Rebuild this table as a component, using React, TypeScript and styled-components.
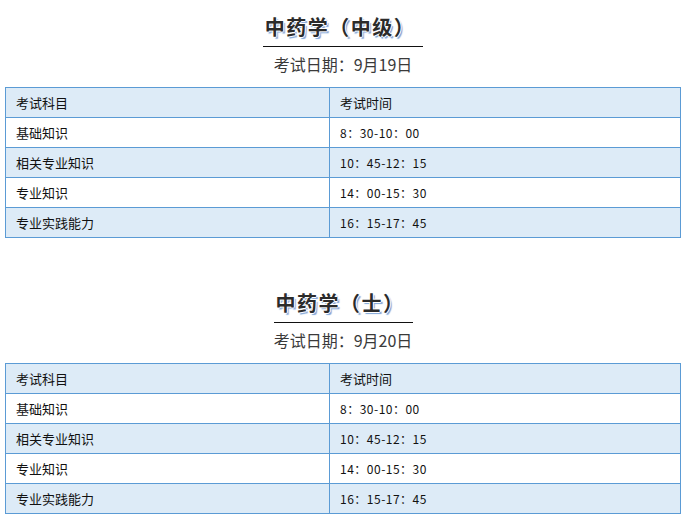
import React from "react";
import styled, { createGlobalStyle } from "styled-components";

type Exam = {
  subject: string;
  time: string;
}

type Schedule = {
  title: string;
  date: string;
  exams: Exam[];
}

const exams: Exam[] = [
  { subject: "基础知识", time: "8：30-10：00" },
  { subject: "相关专业知识", time: "10：45-12：15" },
  { subject: "专业知识", time: "14：00-15：30" },
  { subject: "专业实践能力", time: "16：15-17：45" },
];

const schedules: Schedule[] = [
  { title: "中药学（中级）", date: "考试日期：9月19日", exams },
  { title: "中药学（士）", date: "考试日期：9月20日", exams },
];

const GlobalStyle = createGlobalStyle`
  body {
    margin: 0;
    background: #fff;
    font-family: "Noto Sans CJK SC", "Noto Sans", sans-serif;
  }
`;

const App: React.FC = () => {
  return (
    <Page>
      <GlobalStyle />
      {schedules.map((s) => (
        <Section key={s.title}>
          <Title>{s.title}</Title>
          <DateLine>{s.date}</DateLine>
          <Table>
            <colgroup>
              <col style={{ width: 324 }} />
              <col />
            </colgroup>
            <thead>
              <Row $shaded>
                <Cell>考试科目</Cell>
                <Cell>考试时间</Cell>
              </Row>
            </thead>
            <tbody>
              {s.exams.map((e, i) => (
                <Row key={e.subject} $shaded={i % 2 === 1}>
                  <Cell>{e.subject}</Cell>
                  <TimeCell>{e.time}</TimeCell>
                </Row>
              ))}
            </tbody>
          </Table>
        </Section>
      ))}
    </Page>
  );
};

export default App;

const Page = styled.div`
  width: 685px;
  height: 520px;
  box-sizing: border-box;
  padding: 13px 4px 0 5px;
  display: flex;
  flex-direction: column;
  gap: 51px;
  overflow: hidden;
`;

const Section = styled.div`
  display: flex;
  flex-direction: column;
  align-items: center;
`;

const Title = styled.div`
  font-size: 20px;
  line-height: 28px;
  font-weight: 700;
  letter-spacing: 1.5px;
  color: #2b2b2b;
  padding: 0 8px 5px 2px;
  border-bottom: 1px solid #111;
  text-shadow:
    -1px 0 0 #fff,
    1px 0 0 #fff,
    0 -1px 0 #fff,
    0 1px 0 #fff,
    2px 2px 1px #7fa6d9;
`;

const DateLine = styled.div`
  margin-top: 6px;
  font-size: 16px;
  line-height: 22px;
  color: #3a3a3a;
`;

const Table = styled.table`
  margin-top: 12px;
  width: 100%;
  border-collapse: collapse;
  table-layout: fixed;
  border: 1px solid #5b9bd5;
`;

const Row = styled.tr<{ $shaded?: boolean }>`
  height: 30px;
  background: ${(p) => (p.$shaded ? "#ddebf7" : "#fff")};
`;

const Cell = styled.td`
  border: 1px solid #5b9bd5;
  padding: 0 0 0 10px;
  font-size: 13px;
  color: #111;
  vertical-align: middle;
`;

const TimeCell = styled(Cell)`
  font-size: 12px;
  letter-spacing: 0.5px;
`;
